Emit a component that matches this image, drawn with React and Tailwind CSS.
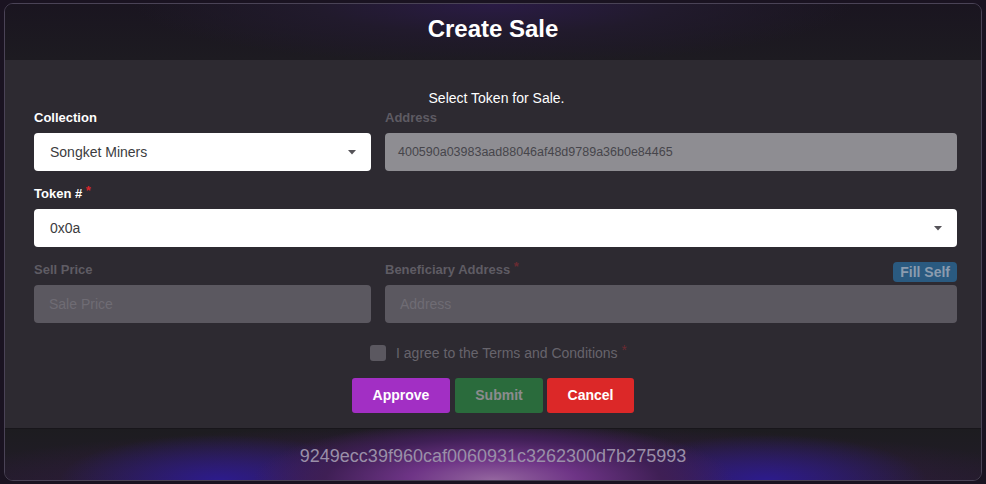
import React from "react";

function Caret() {
  return (
    <svg width="8" height="5" viewBox="0 0 8 5" className="shrink-0">
      <path d="M0 0 L8 0 L4 4.5 Z" fill="#555358" />
    </svg>
  );
}

export default function App() {
  return (
    <div
      className="w-[986px] h-[484px] bg-[#1a1321] pt-[3px] pl-[4px] pr-[4px] pb-[3px] flex"
      style={{ fontFamily: '"Liberation Sans", Arial, sans-serif' }}
    >
      <div className="flex-1 flex flex-col border border-[#4a4356] rounded-[9px] overflow-hidden">
        {/* Header */}
        <div className="h-[56px] shrink-0 flex items-center justify-center pb-[6px] bg-[radial-gradient(ellipse_360px_60px_at_50%_0%,#2a1b45_0%,#211a2c_50%,transparent_100%),linear-gradient(180deg,#1a1520_0%,#1d1b21_100%)]">
          <h1 className="text-[24px] font-bold text-white leading-none tracking-[0px]">Create Sale</h1>
        </div>

        {/* Body */}
        <div className="h-[368px] shrink-0 bg-[#2d2a31] pt-[30px] pl-[29px] pr-[24px] flex flex-col">
          <div className="text-center text-white text-[14px] leading-[16px] pl-[2px]">Select Token for Sale.</div>

          <div className="mt-[5px] grid grid-cols-[337px_1fr] gap-x-[14px]">
            <div className="flex flex-col">
              <div className="h-[22px] text-[13px] font-bold text-white leading-[14px]">Collection</div>
              <div className="h-[38px] bg-white rounded-[4px] flex items-center justify-between pl-[16px] pr-[15px]">
                <span className="text-[14px] text-[#3c3c40]">Songket Miners</span>
                <Caret />
              </div>
            </div>
            <div className="flex flex-col">
              <div className="h-[22px] text-[13px] font-bold text-[#5e5b63] leading-[14px]">Address</div>
              <div className="h-[38px] bg-[#8e8d92] rounded-[4px] flex items-center pl-[13px]">
                <span className="text-[12.5px] text-[#46454b]">400590a03983aad88046af48d9789a36b0e84465</span>
              </div>
            </div>
          </div>

          <div className="mt-[16px] flex flex-col">
            <div className="h-[22px] text-[13px] font-bold text-white leading-[14px]">
              Token # <span className="text-[#d9262c] relative -top-[3px]">*</span>
            </div>
            <div className="h-[38px] bg-white rounded-[4px] flex items-center justify-between pl-[16px] pr-[15px]">
              <span className="text-[14px] text-[#3c3c40]">0x0a</span>
              <Caret />
            </div>
          </div>

          <div className="mt-[16px] grid grid-cols-[337px_1fr] gap-x-[14px]">
            <div className="flex flex-col">
              <div className="h-[22px] text-[13px] font-bold text-[#5f5c64] leading-[14px]">Sell Price</div>
              <div className="h-[38px] bg-[#5b5860] rounded-[4px] flex items-center pl-[15px]">
                <span className="text-[14px] text-[#6f6c74]">Sale Price</span>
              </div>
            </div>
            <div className="flex flex-col">
              <div className="h-[22px] flex items-start justify-between">
                <div className="text-[13px] font-bold text-[#5f5c64] leading-[14px]">
                  Beneficiary Address <span className="text-[#6a2b31] relative -top-[3px]">*</span>
                </div>
                <div className="-mt-[1px] h-[20px] px-[7px] rounded-[4px] bg-[#2a5a80] flex items-center text-[14px] font-bold text-[#8b9caf] leading-none">
                  Fill Self
                </div>
              </div>
              <div className="h-[38px] bg-[#5b5860] rounded-[4px] flex items-center pl-[15px]">
                <span className="text-[14px] text-[#6f6c74]">Address</span>
              </div>
            </div>
          </div>

          <div className="mt-[22px] h-[16px] flex items-center justify-center gap-[10px] pl-[6px]">
            <div className="w-[16px] h-[16px] rounded-[3px] bg-[#5b5860]" />
            <span className="text-[14px] text-[#67646c] leading-none">
              I agree to the Terms and Conditions <span className="text-[#6a2b31] relative -top-[3px]">*</span>
            </span>
          </div>

          <div className="mt-[17px] flex justify-center gap-[4px] pr-[5px]">
            <button className="h-[35px] w-[98px] rounded-[3px] bg-[#a22fc4] text-white text-[14px] font-bold mr-[1px]">Approve</button>
            <button className="h-[35px] w-[88px] rounded-[3px] bg-[#2a6b3c] text-[#8c8c8e] text-[14px] font-bold">Submit</button>
            <button className="h-[35px] w-[87px] rounded-[3px] bg-[#dc2828] text-white text-[14px] font-bold">Cancel</button>
          </div>
        </div>

        {/* Divider */}
        <div className="h-[1px] shrink-0 bg-[#18161b]" />

        {/* Footer */}
        <div className="flex-1 flex items-center justify-center pt-[2px] bg-[radial-gradient(ellipse_240px_60px_at_50%_100%,#94669f_0%,#6e3486_35%,#3f1f55_70%,transparent_100%),radial-gradient(ellipse_160px_45px_at_22%_100%,#2c1b8c_0%,transparent_100%),radial-gradient(ellipse_160px_45px_at_78%_100%,#2c1b8c_0%,transparent_100%),radial-gradient(ellipse_560px_55px_at_50%_100%,#3c1b52_0%,transparent_100%),linear-gradient(180deg,#1d1c20_0%,#221c29_100%)]">
          <span className="text-[18px] text-[#9a8fa8] leading-none">9249ecc39f960caf0060931c3262300d7b275993</span>
        </div>
      </div>
    </div>
  );
}
